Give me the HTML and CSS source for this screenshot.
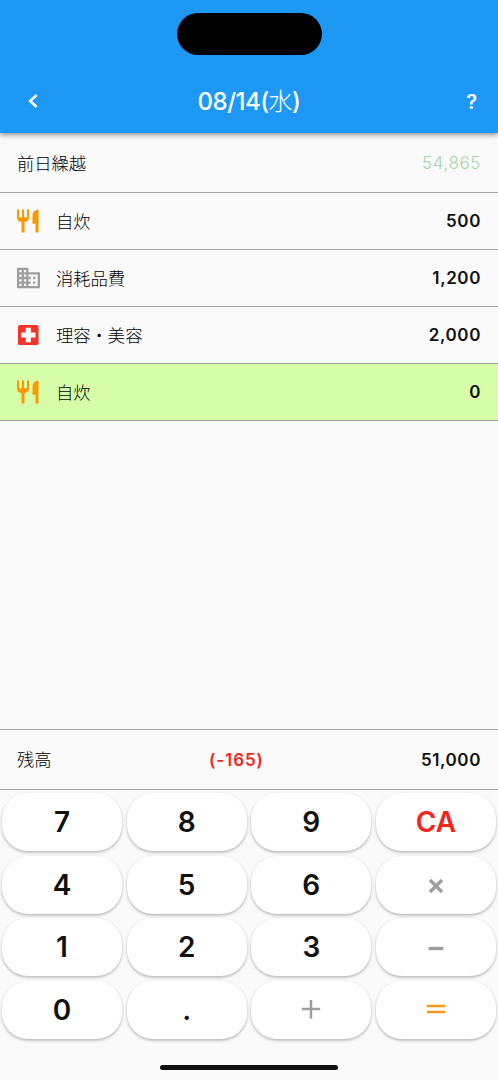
FILE: index.html
```html
<!DOCTYPE html>
<html lang="ja">
<head>
<meta charset="utf-8">
<title>08/14(水)</title>
<link rel="stylesheet" href="styles.css">
</head>
<body>
<main class="screen">
  <header class="header">
    <div class="island"></div>
    <div class="toolbar">
      <svg class="back" viewBox="0 0 10 14"><path d="M8.600 1 2.200 7l6.400 6"/></svg>
      <h1 class="title">08/14(<span class="day">水</span>)</h1>
      <span class="help">?</span>
    </div>
  </header>
  <section class="entries">
    <div class="row carry"><span class="label">前日繰越</span><span class="amount faded">54,865</span></div>
    <div class="row">
      <svg class="icon orange" viewBox="0 0 23 24"><path d="M0 .5h2v7.800h3V.5h2v7.800h3V.5h2v8q0 4-4.500 4.600v10.400h-3V13.100Q0 12.500 0 8.500zM21.500.5v23h-3v-8.700h-3V6.500q0-5 6-6z"/></svg>
      <span class="label">自炊</span><span class="amount">500</span>
    </div>
    <div class="row">
      <svg class="icon gray" viewBox="2 2 20 20"><path d="M12 7V3H2v18h20V7H12zM6 19H4v-2h2v2zm0-4H4v-2h2v2zm0-4H4V9h2v2zm0-4H4V5h2v2zm4 12H8v-2h2v2zm0-4H8v-2h2v2zm0-4H8V9h2v2zm0-4H8V5h2v2zm10 12h-8v-2h2v-2h-2v-2h2v-2h-2V9h8v10zm-2-8h-2v2h2v-2zm0 4h-2v2h2v-2z"/></svg>
      <span class="label">消耗品費</span><span class="amount">1,200</span>
    </div>
    <div class="row">
      <svg class="icon red" viewBox="0 0 24 24"><rect x="1" y="1.500" width="21.500" height="21" rx="2"/><path class="cross" d="M9.100 4.500h5.400v4.800h4.800v5.400h-4.800v4.800H9.100v-4.800H4.300V9.300h4.800z"/></svg>
      <span class="label">理容・美容</span><span class="amount">2,000</span>
    </div>
    <div class="row selected">
      <svg class="icon orange" viewBox="0 0 23 24"><path d="M0 .5h2v7.800h3V.5h2v7.800h3V.5h2v8q0 4-4.500 4.600v10.400h-3V13.100Q0 12.500 0 8.500zM21.500.5v23h-3v-8.700h-3V6.500q0-5 6-6z"/></svg>
      <span class="label">自炊</span><span class="amount">0</span>
    </div>
  </section>
  <section class="balance"><span class="label">残高</span><span class="difference">(-165)</span><span class="amount">51,000</span></section>
  <section class="keypad">
    <button class="key">7</button><button class="key">8</button><button class="key">9</button><button class="key clear">CA</button>
    <button class="key">4</button><button class="key">5</button><button class="key">6</button>
    <button class="key"><svg class="op" viewBox="0 0 20 20"><path class="thick" d="M4 5l12 12M16 5l-12 12"/></svg></button>
    <button class="key">1</button><button class="key">2</button><button class="key">3</button>
    <button class="key"><svg class="op" viewBox="0 0 20 20"><path class="thick" d="M2.700 11.500h14.700"/></svg></button>
    <button class="key">0</button><button class="key">.</button>
    <button class="key"><svg class="op" viewBox="0 0 20 20"><path d="M.8 9h18.400M10 0v18.400"/></svg></button>
    <button class="key"><svg class="op equals" viewBox="0 0 20 20"><path d="M.8 6h18.400M.8 12h18.400"/></svg></button>
  </section>
  <footer class="bottom"><div class="home-bar"></div></footer>
</main>
</body>
</html>
```
FILE: styles.css
```css
* { box-sizing: border-box; }
body { margin: 0; background: #fafafa; color: #111; font-family: Inter, "Noto Sans CJK JP", sans-serif; }
.screen { width: 498px; height: 1080px; display: flex; flex-direction: column; overflow: hidden; }
.header { height: 133px; flex: none; padding-top: 13px; background: #1e98f5; box-shadow: 0 2px 5px rgba(0,0,0,.42); color: #fff; }
.island { width: 145px; height: 42px; margin: 0 auto; border-radius: 21px; background: #000; }
.toolbar { height: 66px; margin-top: 12px; padding: 2px 21px 0 28px; display: grid; grid-template-columns: 53px 1fr 60px; align-items: center; }
.back { width: 10px; height: 14px; fill: none; stroke: #fff; stroke-width: 2.500; }
.title { margin: 0; padding-top: 2px; font-size: 24px; font-weight: 500; line-height: 34px; text-align: center; letter-spacing: -.5px; }
.day { font-weight: 300; }
.help { padding-top: 1px; font-size: 20px; font-weight: 600; text-align: right; }
.entries { flex: 1; }
.row { height: 57px; padding: 0 17px; display: flex; align-items: center; border-bottom: 1px solid #a5a5a5; }
.carry { height: 60px; }
.selected { background: #d6fea9; }
.icon { width: 23px; height: 24px; margin-right: 16px; flex: none; }
.orange { fill: #ff9800; }
.gray { fill: #9e9e9e; }
.red { fill: #f4342b; }
.cross { fill: #fff; }
.label { padding-top: 1px; font-size: 17.300px; font-weight: 300; line-height: 26px; color: #000; }
.row .label { padding-top: 2px; }
.amount { margin-left: auto; font-size: 17px; font-weight: 600; letter-spacing: .6px; }
.faded { color: #a5d6a7; font-weight: 300; letter-spacing: .6px; }
.balance { height: 61px; flex: none; padding: 0 17px; display: grid; grid-template-columns: 191px 1fr auto; align-items: center; border: 1px solid #a5a5a5; border-width: 1px 0; }
.balance .amount { padding-top: 1px; }
.difference { padding-top: 1px; padding-left: 1px; color: #f4261c; font-size: 17px; font-weight: 600; letter-spacing: .9px; }
.keypad { flex: none; padding: 3px 2px 0; display: grid; grid-template-columns: repeat(4, 120px); justify-content: space-between; grid-auto-rows: 58px; row-gap: 4.500px; }
.key { padding: 0; border: 0; border-radius: 26px; background: #fff; box-shadow: 0 1.500px 3px rgba(0,0,0,.28); color: #111; font: 600 28px/58px Inter, sans-serif; display: flex; align-items: center; justify-content: center; }
.clear { color: #f4261c; }
.op { width: 20px; height: 20px; fill: none; stroke: #9e9e9e; stroke-width: 2.500; }
.thick { stroke-width: 3.400; }
.equals { stroke: #f79a1c; }
.bottom { height: 41.500px; flex: none; padding-top: 26.500px; }
.home-bar { width: 178px; height: 5px; margin: 0 auto; border-radius: 3px; background: #111; }
```
